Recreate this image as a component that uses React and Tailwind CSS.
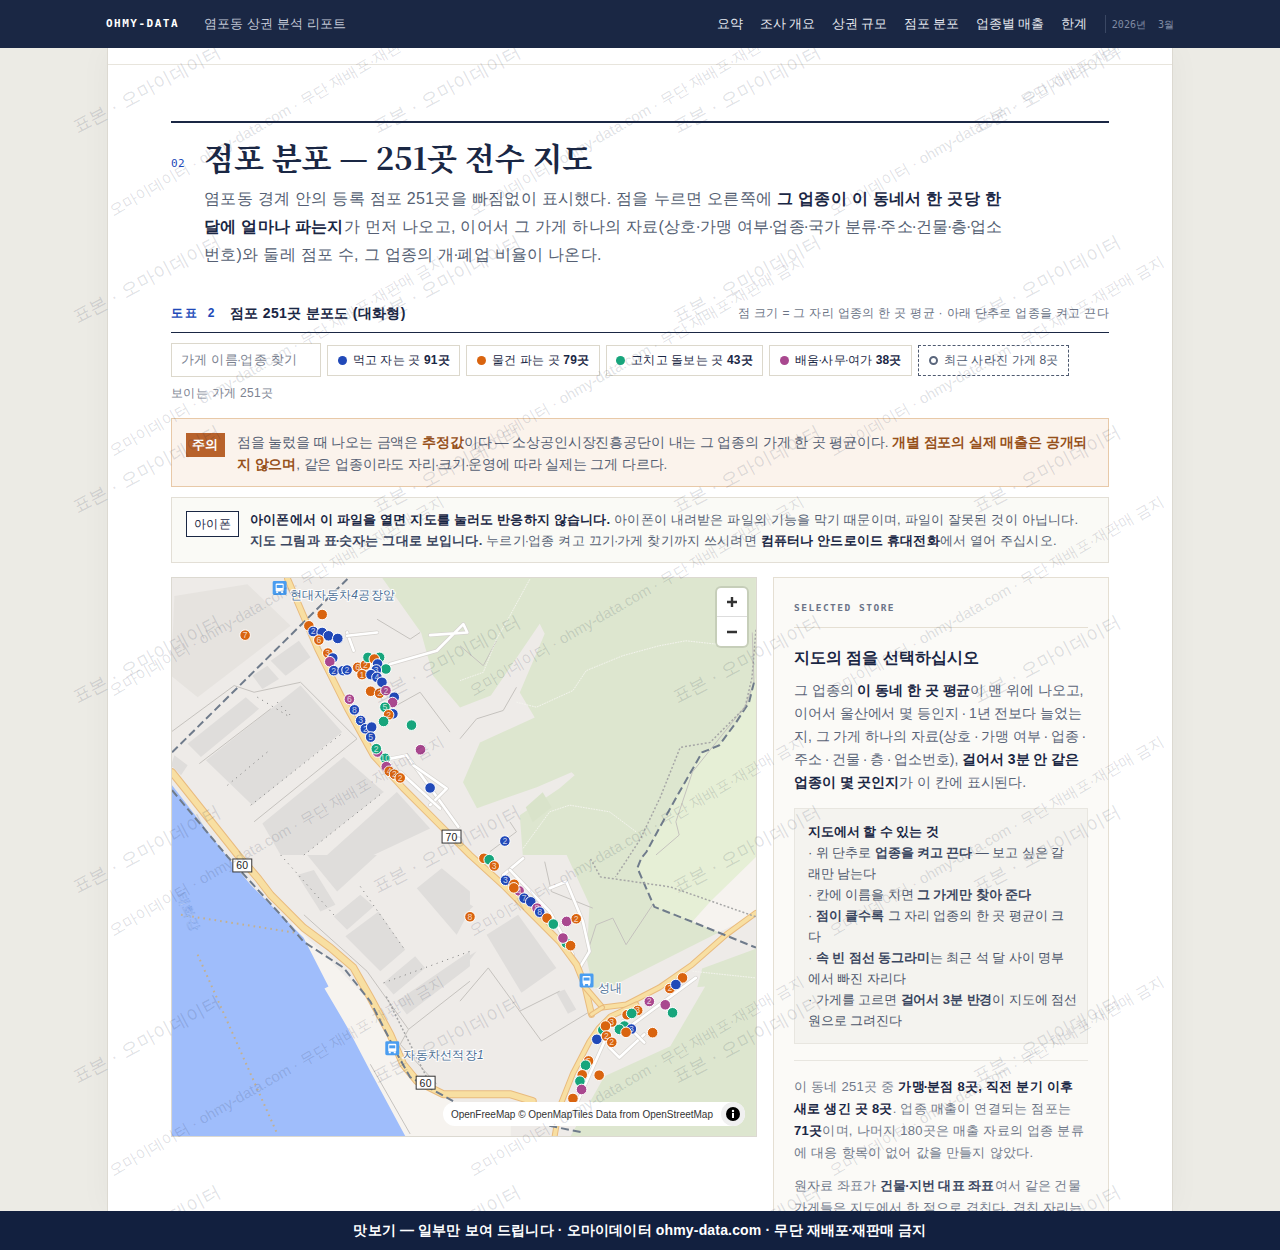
import React from 'react';

// frames: map crops used for tracing, all drawn at 1/3 scale
const Z5 = 'translate(-1,-2) scale(0.3333)';
const Z6 = 'translate(289,-2) scale(0.3333)';
const Z7 = 'translate(-1,278) scale(0.3333)';
const Z8 = 'translate(289,278) scale(0.3333)';

const OR = '#d9640f', BL = '#2149b8', GR = '#17a57c', PU = '#a9488f';

const DOTS_A = [
  [455,116,OR],[415,150,OR],[428,167,BL,'2'],[455,170,BL],[474,180,BL],[502,188,BL],[445,193,OR,'6'],[223,178,OR,'7'],
  [472,232,OR,'3'],[487,247,BL],[478,258,PU],[490,285,BL,'2'],[518,285,BL,'2'],[530,283,BL,'2'],[562,275,OR,'6'],[585,268,OR,'2'],
  [593,245,GR],[628,245,GR],[612,250,OR],[622,265,BL],[647,280,GR],[618,283,BL,'3'],[575,297,OR,'1'],[602,297,BL],[620,305,BL,'4'],[635,320,BL],
  [601,347,OR],[628,353,OR,'2'],[647,345,PU,'2'],[672,365,BL],[667,381,PU],[644,395,GR,'5'],[537,371,PU,'6'],[552,403,BL,'8'],[571,435,BL,'3'],
  [668,415,BL],[655,418,OR,'2'],[640,438,GR],[724,449,GR],[585,460,BL,'2'],[604,455,BL],[601,485,BL,'5'],[622,530,PU],[618,520,GR,'2'],
  [645,549,GR,'10'],[648,574,PU],[657,588,OR,'4'],[673,597,OR,'2'],[690,608,OR,'2'],[751,523,PU],[780,638,BL],
];
const DOTS_B = [
  [72,10,OR],[88,14,GR],[103,33,OR,'3'],[137,76,BL,'3'],[163,88,OR],[178,108,PU,'4'],[162,99,OR],[193,130,BL,'7'],[213,141,BL],[232,160,PU,'8'],
  [240,172,BL,'8'],[262,190,OR],[281,208,GR],[321,200,PU],[350,192,OR,'2'],[320,265,GR],[310,250,PU],[333,273,OR],[30,186,OR,'8'],
  [670,370,OR],[632,402,OR,'2'],[650,390,BL],[570,441,PU,'2'],[618,451,PU],[640,475,GR],[535,468,OR,'3'],[503,481,OR],[517,477,GR],
  [457,503,OR,'3'],[430,527,GR],[438,515,OR],[495,515,GR],[480,525,GR],[516,524,BL,'3'],[500,534,OR],[580,535,OR],[412,555,BL],[441,545,OR,'2'],[457,564,OR,'2'],
  [387,620,OR,'5'],[378,633,GR],[368,662,OR],[361,681,GR],[366,706,PU],[419,663,OR],[340,733,OR],
];

function Dot({ x, y, c, n }) {
  return (
    <g>
      <circle cx={x} cy={y} r="16" fill={c} stroke="#fff" strokeWidth="3" />
      {n && <text x={x} y={y + 9} textAnchor="middle" fontSize="26" fill="#fff" fillOpacity=".75" fontFamily="Liberation Sans">{n}</text>}
    </g>
  );
}

function Road({ p, w = 7, c = '#e9bb7e', f = '#f8dfa2' }) {
  return (
    <g fill="none" strokeLinejoin="round" strokeLinecap="round">
      <polyline points={p} stroke={c} strokeWidth={w} />
      <polyline points={p} stroke={f} strokeWidth={w - 2} />
    </g>
  );
}

function Minor({ p }) {
  return (
    <g fill="none" strokeLinejoin="round" strokeLinecap="round">
      <polyline points={p} stroke="#d6d3cf" strokeWidth="12" />
      <polyline points={p} stroke="#fff" strokeWidth="8" />
    </g>
  );
}

function Bus({ x, y }) {
  return (
    <g transform={`translate(${x},${y})`}>
      <rect width="14" height="14" rx="1.5" fill="#4a9df0" />
      <rect x="3" y="2.5" width="8" height="8" rx="1" fill="#fff" />
      <rect x="4" y="4" width="6" height="3" fill="#4a9df0" />
      <rect x="3.5" y="10.5" width="2" height="1.5" fill="#fff" />
      <rect x="8.5" y="10.5" width="2" height="1.5" fill="#fff" />
    </g>
  );
}

function Shield({ x, y, n }) {
  return (
    <g transform={`translate(${x},${y})`}>
      <rect width="19" height="13" fill="#fff" stroke="#333" strokeWidth="1" />
      <text x="9.5" y="10.5" textAnchor="middle" fontSize="10.5" fill="#222" fontFamily="Liberation Sans">{n}</text>
    </g>
  );
}

function PlaceLabel({ x, y, children, size = 12 }) {
  return (
    <text x={x} y={y} fontSize={size} fill="#4b6f96" stroke="#fff" strokeWidth="2" paintOrder="stroke" fontFamily="Liberation Sans, sans-serif">{children}</text>
  );
}

function MapArt() {
  return (
    <svg viewBox="0 0 586 560" className="block h-full w-full">
      <rect width="586" height="560" fill="#eeebe8" />
      {/* forest */}
      <polygon fill="#dde6cf" points="211,0 586,0 586,300 532,330 560,350 586,345 586,560 400,560 434,500 500,470 535,410 472,415 422,411 416,381 419,328 396,278 352,278 349,238 389,211 404,198 401,195 366,210 306,231 292,205 309,165 364,140 349,115 374,56 369,46 320,118 289,130 262,98 250,55" />
      <polygon fill="#e6efd6" points="586,100 584,105 579,125 566,145 549,168 532,175 509,215 489,251 476,275 467,291 484,330 522,345 586,300" />
      <polygon fill="#f6f3ef" points="586,280 540,325 522,345 586,370" />
      <polygon fill="#eeebe8" points="431,415 560,350 586,340 586,372 532,392 522,430 455,470 420,470" />
      <polygon fill="#d9e3ca" points="355,230 372,215 381,230 362,245" />
      {/* pale sand, water */}
      <polygon fill="#f6f3ef" points="120,345 199,425 226,478 239,501 282,525 340,530 340,560 220,560 150,420" />
      <polygon fill="#9fbdfb" points="0,208 54,278 79,308 109,338 132,361 157,410 153,412 176,451 199,495 234,560 0,560" />
      <g stroke="#c3b08f" strokeWidth="6" strokeDasharray="5 12" fill="none">
        <g transform={Z7}>
          <polyline points="30,180 380,235" />
          <polyline points="80,300 320,840" />
        </g>
      </g>
      {/* buildings */}
      <g fill="#dfdddb">
        <g transform={Z5}>
          <polygon fill="#e6e3df" points="10,60 230,25 360,150 80,365 0,300" />
          <polygon points="300,255 385,195 420,245 345,300" />
          <polygon points="245,300 290,270 325,310 275,340" />
          <polygon points="105,555 390,330 515,470 245,690" />
          <polygon points="50,505 225,365 265,400 90,545" />
          <polygon points="275,745 520,545 640,650 400,840 330,840" />
          <polygon points="10,540 50,570 30,600 0,570" />
          <polygon points="470,840 680,650 780,760 610,840" />
        </g>
        <g transform={Z7}>
          <polygon points="410,0 620,0 500,110" />
          <polygon points="380,60 430,45 495,150 450,170" />
          <polygon points="490,185 570,120 610,155 530,225" />
          <polygon points="525,245 625,170 705,285 630,350" />
          <polygon points="640,385 735,305 765,340 670,420" />
          <polygon points="740,100 815,40 900,110 900,165 860,240" />
          <polygon points="680,440 900,290 900,335 710,480" />
        </g>
        <g transform={Z8}>
          <polygon points="80,240 175,180 290,340 185,415" />
          <polygon points="0,130 40,155 0,190" />
          <polygon points="0,320 50,290 0,355" />
          <polygon points="290,415 315,405 350,465 325,478" />
        </g>
      </g>
      {/* thin paths */}
      <g fill="none" stroke="#c5c2be" strokeWidth="3">
        <g transform={Z5}>
          <polyline points="0,470 190,330 250,350 390,320 560,490 250,740" />
          <polyline points="85,565 300,400" />
          <polyline points="620,130 720,190 750,170" />
          <polyline points="660,400 750,350 840,470" />
        </g>
        <g transform={Z6}>
          <polyline points="0,490 50,430 130,405 170,335" />
          <polyline points="0,210 70,270 110,195" />
          <polyline points="90,830 170,770 150,740" />
        </g>
        <g transform={Z7}>
          <polyline points="400,180 590,350 715,525 900,380" />
          <polyline points="715,525 690,570 800,690" />
          <polyline points="600,630 720,840" />
        </g>
        <g transform={Z8}>
          <polyline points="0,440 85,340 245,560 385,475" />
          <polyline points="180,470 300,410" />
          <polyline points="255,20 275,110 400,160" />
          <polyline points="375,320 410,210 460,190 500,270 580,150" />
        </g>
        <g transform={Z6}>
          <polyline points="880,170 885,320 860,390 700,590 650,740 660,780 590,840" />
        </g>
      </g>
      {/* fence dots */}
      <g fill="none" stroke="#777" strokeWidth="3" strokeDasharray="3 14">
        <g transform={Z5}>
          <polyline points="170,630 290,530" />
          <polyline points="240,690 520,470" />
          <polyline points="260,365 350,420" />
          <polyline points="320,380 360,420" />
          <polyline points="400,840 640,650" />
        </g>
        <g transform={Z7}>
          <polyline points="330,0 490,180" />
          <polyline points="570,95 700,280" />
          <polyline points="640,385 900,290" />
        </g>
      </g>
      {/* white trails */}
      <g fill="none" stroke="#f4f4ee" strokeWidth="3" strokeDasharray="5 3">
        <g transform={Z6}>
          <polyline points="210,10 150,120 110,190 70,290 0,315" />
          <polyline points="170,380 230,395 340,345 380,285 490,240 600,210 680,195 770,205" />
          <polyline points="190,820 270,710 330,690 450,710 530,770" />
        </g>
        <g transform={Z8}>
          <polyline points="700,350 890,370" />
        </g>
      </g>
      {/* minor streets */}
      <g transform={Z5}>
        <Minor p="530,170 550,225" />
        <Minor p="530,180 620,170" />
        <Minor p="660,265 800,225 880,145 892,170 780,178" />
        <Minor p="660,550 710,540 865,755" />
        <Minor p="730,570 830,640 780,690" />
        <Minor p="690,590 810,700" />
      </g>
      <g transform={Z8}>
        <Minor p="130,60 190,10" />
        <Minor p="150,45 270,170 340,300" />
        <Minor p="270,100 320,80 370,200 390,290 360,340" />
        <Minor p="520,510 710,370" />
        <Minor p="450,580 480,610 555,540" />
        <Minor p="440,550 355,740" />
        <Minor p="490,500 555,565" />
      </g>
      {/* highways */}
      <Road w={8} p="0,195 66,278 86,301 99,318 132,351 159,371 182,391 199,421 219,458 232,488 246,505 272,518 299,518 339,518 362,525" />
      <Road w={7} p="116,1 146,71 176,131 202,178 232,211 266,245 299,278 332,308 369,345 389,365 406,388 414,408 421,438" />
      <Road w={6} p="414,410 432,431 456,428 489,411 522,388 556,358 586,336" />
      <Road w={6} p="466,428 440,440 428,452 419,465 402,498 389,531 384,560" />
      <Road w={5} p="421,438 432,431" />
      {/* rail */}
      <g fill="none" stroke="#6f7b8b" strokeWidth="2" strokeDasharray="8 4">
        <polyline points="0,175 176,1" />
        <polyline points="0,213 56,280 109,338 132,365 172,391 199,425 226,478 239,501 282,525" />
        <polyline points="584,105 579,125 566,145 549,168 532,175 509,215 489,251 476,275 471,281 467,291 484,330 522,345 586,371" />
        <polyline points="410,556 330,540" />
      </g>
      <g fill="none" stroke="#a6a6a6" strokeWidth="1.5" strokeDasharray="2 2">
        <polyline points="586,52 582,100 575,130 540,165 510,170 490,220 470,262 455,285 445,300" />
        <polyline points="420,282 430,300 500,310 586,340" />
        <polyline points="215,420 240,470 255,500" />
      </g>
      <g transform={Z5}>{DOTS_A.map(([x, y, c, n], i) => <Dot key={i} x={x} y={y} c={c} n={n} />)}</g>
      <g transform={Z6}><Dot x={135} y={798} c={BL} n="2" /></g>
      <g transform={Z8}>{DOTS_B.map(([x, y, c, n], i) => <Dot key={i} x={x} y={y} c={c} n={n} />)}</g>
      <Bus x={101} y={3} />
      <PlaceLabel x={118} y={21}>현대자동차<tspan fontStyle="italic">4</tspan>공장앞</PlaceLabel>
      <Bus x={409} y={397} />
      <PlaceLabel x={427} y={415}>성내</PlaceLabel>
      <Bus x={214} y={465} />
      <PlaceLabel x={232} y={483}>자동차선적장<tspan fontStyle="italic">1</tspan></PlaceLabel>
      <Shield x={271} y={253} n="70" />
      <Shield x={61} y={282} n="60" />
      <Shield x={245} y={500} n="60" />
      <text transform="translate(5,318) rotate(68)" fontSize="13" fill="#eaf1ff" stroke="#7da2ea" strokeWidth="0.6" fontFamily="Liberation Sans, sans-serif">태화강</text>
    </svg>
  );
}

const bold = 'font-bold text-[#1a2744]';

// the middle dot sits tighter in the reference than the font's own advance
const Mid = () => <span className="-ml-[.08em] tracking-[-.08em]">·</span>;

function Watermarks() {
  const big = [];
  for (let j = 0; j < 7; j++) for (let i = 0; i < 4; i++) big.push([78 + 300 * i, 136 + 190 * j]);
  const small = [];
  for (let j = 0; j < 6; j++) for (let i = 0; i < 3; i++) small.push([114 + 360 * i, 218 + 240 * j]);
  return (
    <div className="pointer-events-none absolute inset-0 z-10 overflow-hidden">
      {big.map(([x, y], i) => (
        <span key={i} className="absolute origin-bottom-left -rotate-[28deg] text-[18px] leading-none tracking-[.5px] whitespace-nowrap text-[#1a2744]/15" style={{ left: x, top: y - 18 }}>표본 · 오마이데이터</span>
      ))}
      {small.map(([x, y], i) => (
        <span key={i} className="absolute origin-bottom-left -rotate-[30deg] text-[15px] leading-none tracking-normal whitespace-nowrap text-[#1a2744]/15" style={{ left: x, top: y - 15 }}>오마이데이터 · ohmy-data.com · 무단 재배포·재판매 금지</span>
      ))}
    </div>
  );
}

function Chip({ color, children }) {
  return (
    <div className="flex h-[31px] items-center gap-[6px] border border-[#dcd8cc] bg-white px-[9.5px] text-[12px] tracking-[.015em] text-[#1a2744]">
      <span className="h-[9px] w-[9px] rounded-full" style={{ background: color }} />
      <span>{children}</span>
    </div>
  );
}

const NAV = ['요약', '조사 개요', '상권 규모', '점포 분포', '업종별 매출', '한계'];

export default function App() {
  return (
    <div className="relative flex h-screen flex-col overflow-hidden bg-[#ecebe5] font-['Liberation_Sans',sans-serif] tracking-[.02em] text-[#1a2744]">
      <header className="relative z-20 flex h-12 shrink-0 items-center bg-[#1a2744] px-[106px] tracking-normal">
        <span className="w-[98px] font-['DejaVu_Sans_Mono',monospace] text-[11px] font-bold tracking-[1.5px] text-white">OHMY-DATA</span>
        <span className="text-[13px] tracking-[.01em] text-[#c4cad8]">염포동 상권 분석 리포트</span>
        <nav className="ml-auto flex items-center gap-[16.6px] text-[12.5px] text-[#e6e9f0]">
          {NAV.map(n => <span key={n}>{n}</span>)}
        </nav>
        <span className="ml-[18px] flex h-[18px] items-center border-l border-[#3a4763] pl-[6px] font-['DejaVu_Sans_Mono',monospace] text-[10px] whitespace-pre text-[#808ba3]">2026년  3월</span>
      </header>

      <main className="mx-[107px] min-h-0 flex-1 overflow-hidden border-x border-[#dcd9d1] bg-white shadow-[0_0_30px_rgba(0,0,0,.04)]">
        <div className="h-[17px] border-b border-[#e8e5dd]" />
        <div className="mx-[63px] mt-[56px]">
          <section className="border-t-2 border-[#1a2744]">
            <div className="mt-[11px] flex items-end">
              <span className="mb-[8px] w-[33px] font-['DejaVu_Sans_Mono',monospace] text-[11px] tracking-[.5px] text-[#2149b8]">02</span>
              <h2 className="font-['Noto_Serif_CJK_KR',serif] text-[31px] leading-[46px] font-bold tracking-normal">점포 분포 — 251곳 전수 지도</h2>
            </div>
            <p className="mt-[5px] ml-[33px] w-[805px] text-[16px] leading-[28px] tracking-[.018em] text-[#555f73]">
              염포동 경계 안의 등록 점포 251곳을 빠짐없이 표시했다. 점을 누르면 오른쪽에 <b className={bold}>그 업종이 이 동네서 한 곳당 한 달에 얼마나 파는지</b>가 먼저 나오고, 이어서 그 가게 하나의 자료(상호<Mid />가맹 여부<Mid />업종<Mid />국가 분류<Mid />주소<Mid />건물<Mid />층<Mid />업소번호)와 둘레 점포 수, 그 업종의 개<Mid />폐업 비율이 나온다.
            </p>
          </section>

          <div className="mt-[31px] flex h-[33px] items-center border-b border-[#1a2744] pb-[6px]">
            <span className="w-[59px] text-[12px] font-bold tracking-[1.5px] whitespace-pre text-[#2149b8]">도표  2</span>
            <span className="text-[14px] font-bold">점포 251곳 분포도 (대화형)</span>
            <span className="ml-auto text-[12px] text-[#6b7486]">점 크기 = 그 자리 업종의 한 곳 평균 · 아래 단추로 업종을 켜고 끈다</span>
          </div>

          <div className="mt-[10px] flex items-center gap-[6px]">
            <div className="flex h-[34px] w-[150px] items-center border border-[#dcd8cc] px-[9px] text-[12.5px] text-[#7b8290]"><span>가게 이름<Mid />업종 찾기</span></div>
            <Chip color={BL}>먹고 자는 곳 <b>91곳</b></Chip>
            <Chip color={OR}>물건 파는 곳 <b>79곳</b></Chip>
            <Chip color={GR}>고치고 돌보는 곳 <b>43곳</b></Chip>
            <Chip color={PU}>배움<Mid />사무<Mid />여가 <b>38곳</b></Chip>
            <div className="flex h-[31px] items-center gap-[6px] border border-dashed border-[#4e5a70] px-[9.5px] text-[12px] tracking-[.015em] text-[#4e5a70]">
              <span className="h-[9px] w-[9px] rounded-full border-2 border-[#5a667c]" />
              <span>최근 사라진 가게 8곳</span>
            </div>
          </div>

          <div className="mt-[7px] text-[12px] leading-[18px] text-[#7b8290]">보이는 가게 251곳</div>

          <div className="mt-[16px] flex h-[69px] items-start gap-3 border border-[#e8c9a8] bg-[#fbf3ec] px-[14px] py-[13px]">
            <span className="mt-[1px] flex h-6 w-[39px] shrink-0 items-center justify-center bg-[#b8622b] text-[13px] font-bold text-white">주의</span>
            <p className="text-[13.5px] leading-[22px] tracking-[-.008em] text-[#555f73]">
              점을 눌렀을 때 나오는 금액은 <b className="text-[#96501a]">추정값</b>이다 — 소상공인시장진흥공단이 내는 그 업종의 가게 한 곳 평균이다. <b className="text-[#96501a]">개별 점포의 실제 매출은 공개되</b><br /><b className="text-[#96501a]">지 않으며</b>, 같은 업종이라도 자리<Mid />크기<Mid />운영에 따라 실제는 그게 다르다.
            </p>
          </div>

          <div className="mt-[10px] flex h-[66px] items-start gap-[11px] border border-[#e3dfd6] bg-[#fafaf6] py-[11px] pr-5 pl-[14px]">
            <span className="mt-[2px] flex h-[26px] w-[53px] shrink-0 items-center justify-center border border-[#1a2744] bg-white text-[12px]">아이폰</span>
            <p className="text-[13px] leading-[21px] tracking-[.015em] text-[#555f73]">
              <b className={bold}>아이폰에서 이 파일을 열면 지도를 눌러도 반응하지 않습니다.</b> 아이폰이 내려받은 파일의 기능을 막기 때문이며, 파일이 잘못된 것이 아닙니다. <b className="font-bold text-[#3a4660]">지도 그림과 표<Mid />숫자는 그대로 보입니다.</b> 누르기<Mid />업종 켜고 끄기<Mid />가게 찾기까지 쓰시려면 <b className={bold}>컴퓨터나 안드로이드 휴대전화</b>에서 열어 주십시오.
            </p>
          </div>

          <div className="mt-[14px] grid grid-cols-[586px_336px] items-start gap-4">
            <div className="relative h-[560px] overflow-hidden border border-[#dcd9d1]">
              <MapArt />
              <div className="absolute top-[10px] right-[9px] w-[30px] overflow-hidden rounded-[4px] bg-white shadow-[0_0_0_2px_rgba(0,0,0,.1)]">
                <div className="flex h-[29px] items-center justify-center border-b border-[#ddd]">
                  <svg width="12" height="12" viewBox="0 0 12 12"><path d="M6 1v10M1 6h10" stroke="#333" strokeWidth="2.4" /></svg>
                </div>
                <div className="flex h-[29px] items-center justify-center">
                  <svg width="12" height="12" viewBox="0 0 12 12"><path d="M1 6h10" stroke="#333" strokeWidth="2.4" /></svg>
                </div>
              </div>
              <div className="absolute right-[11px] bottom-[10px] flex h-6 items-center gap-2 rounded-full bg-white pl-2 text-[10px] tracking-normal text-[#333]">
                <span>OpenFreeMap © OpenMapTiles Data from OpenStreetMap</span>
                <span className="flex h-6 w-6 items-center justify-center rounded-full bg-[#f0f0f0]">
                  <svg width="14" height="14" viewBox="0 0 14 14"><circle cx="7" cy="7" r="7" fill="#000" /><rect x="6" y="6" width="2" height="5" fill="#fff" /><circle cx="7" cy="4" r="1.2" fill="#fff" /></svg>
                </span>
              </div>
            </div>

            <aside className="border border-[#e5dfd3] bg-[#fbfaf7] px-5 pt-[23px] text-[14px] leading-[23px] tracking-normal text-[#5a6478]">
              <div className="border-b border-[#e5dfd3] pb-[12px] font-['DejaVu_Sans_Mono',monospace] text-[9.5px] leading-[14px] font-bold tracking-[1.5px] text-[#6b7488]">SELECTED STORE</div>
              <h3 className="mt-[18px] text-[16px] leading-[24px] font-bold text-[#1a2744]">지도의 점을 선택하십시오</h3>
              <p className="mt-[9px] tracking-[-.004em]">
                그 업종의 <b className={bold}>이 동네 한 곳 평균</b>이 맨 위에 나오고, 이어서 울산에서 몇 등인지 <Mid /> 1년 전보다 늘었는지, 그 가게 하나의 자료(상호 <Mid /> 가맹 여부 <Mid /> 업종 <Mid /><br />주소 <Mid /> 건물 <Mid /> 층 <Mid /> 업소번호), <b className={bold}>걸어서 3분 안 같은<br />업종이 몇 곳인지</b>가 이 칸에 표시된다.
              </p>
              <div className="mt-[14px] border border-[#e8e6e0] bg-[#f4f3ef] py-[12px] pr-[8px] pl-[13px] text-[13px] leading-[21px] tracking-[-.005em] text-[#4c566b]">
                <div className="font-bold text-[#1a2744]">지도에서 할 수 있는 것</div>
                <div>· 위 단추로 <b className="text-[#3a4660]">업종을 켜고 끈다</b> — 보고 싶은 갈<br />래만 남는다</div>
                <div>· 칸에 이름을 치면 <b className="text-[#3a4660]">그 가게만 찾아 준다</b></div>
                <div>· <b className="text-[#3a4660]">점이 클수록</b> 그 자리 업종의 한 곳 평균이 크<br />다</div>
                <div>· <b className="text-[#3a4660]">속 빈 점선 동그라미</b>는 최근 석 달 사이 명부<br />에서 빠진 자리다</div>
                <div>· 가게를 고르면 <b className="text-[#3a4660]">걸어서 3분 반경</b>이 지도에 점선<br />원으로 그려진다</div>
              </div>
              <div className="mt-4 border-t border-[#e8e6e0] pt-[15px] text-[13px] leading-[22px] tracking-[.02em] text-[#6f7889]">
                <p>이 동네 251곳 중 <b className={bold}>가맹<Mid />분점 8곳, 직전 분기 이후 새로 생긴 곳 8곳</b>. 업종 매출이 연결되는 점포는 <b className={bold}>71곳</b>이며, 나머지 180곳은 매출 자료의 업종 분류에 대응 항목이 없어 값을 만들지 않았다.</p>
                <p className="mt-[11px] tracking-[.008em]">원자료 좌표가 <b className="font-bold text-[#3a4660]">건물<Mid />지번 대표 좌표</b>여서 같은 건물 가게들은 지도에서 한 점으로 겹친다. 겹친 자리는 숫자로 표시된다.</p>
              </div>
            </aside>
          </div>
        </div>
      </main>

      <footer className="relative z-20 flex h-[39px] shrink-0 items-center justify-center bg-[#12203f] text-[14px] font-bold tracking-[.012em] text-white">
        맛보기 — 일부만 보여 드립니다 · 오마이데이터 ohmy-data.com · 무단 재배포<Mid />재판매 금지
      </footer>

      <Watermarks />
    </div>
  );
}
